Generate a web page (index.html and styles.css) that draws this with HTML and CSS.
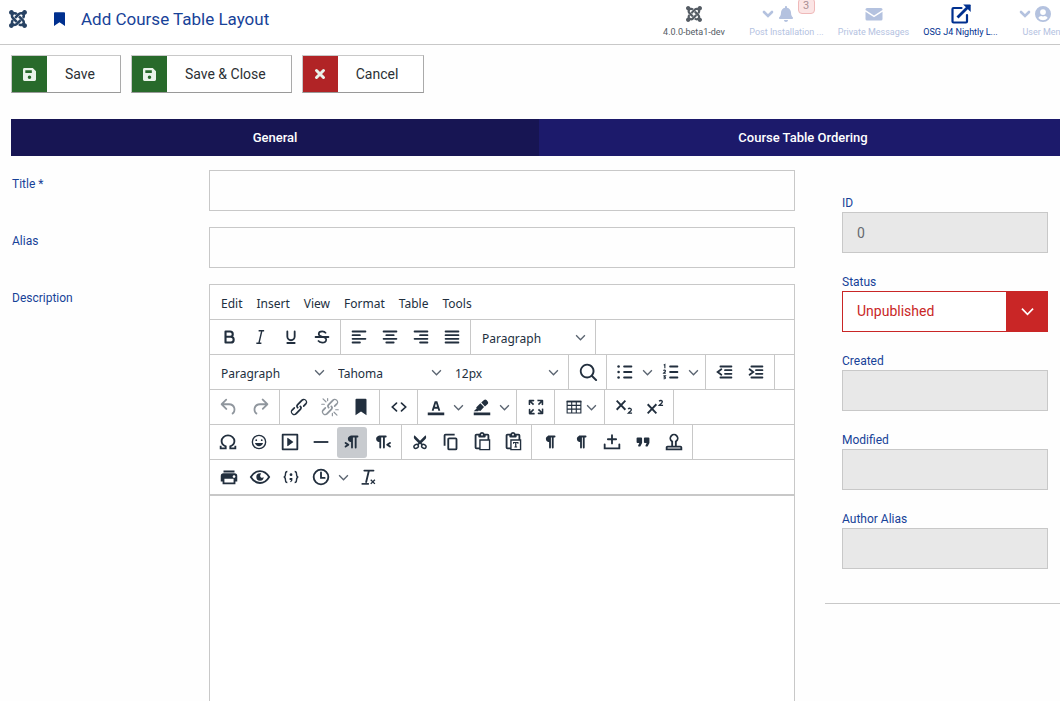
FILE: index.html
```html
<!DOCTYPE html>
<html lang="en">
<head>
<meta charset="utf-8">
<meta name="viewport" content="width=device-width, initial-scale=1">
<title>Add Course Table Layout</title>
<link rel="stylesheet" href="styles.css">
</head>
<body>
<svg class="sprite" aria-hidden="true">
  <symbol id="joomla" viewBox="0 32 448 448"><path d="M.6 92.1C.6 58.8 27.4 32 60.4 32c30 0 54.5 21.9 59.2 50.2 32.6-7.6 67.1.6 96.5 30l-44.3 44.3c-20.5-20.5-42.6-16.3-55.4-3.5-14.3 14.3-14.3 37.9 0 52.2l99.5 99.5-44 44.3c-87.7-87.2-49.7-49.7-99.8-99.7-26.8-26.5-35-64.8-24.8-98.9C20.4 144.6.6 120.7.6 92.1zm129.5 116.4l44.3 44.3c10-10 89.7-89.7 99.7-99.8 14.3-14.3 37.6-14.3 51.9 0 12.8 12.8 17 35-3.5 55.4l44 44.3c31.2-31.2 38.5-67.6 28.9-101.2 29.2-4.1 51.9-29.2 51.9-59.5 0-33.2-26.8-60.1-59.8-60.1-30.3 0-55.4 22.5-59.5 51.6-33.8-9.9-71.7-1.5-98.3 25.1-18.3 19.1-71.1 71.5-99.6 99.9zm266.3 152.2c8.2-32.7-.9-68.5-26.3-93.9-11.8-12.2 5 4.7-99.5-99.7l-44.3 44.3 99.7 99.7c14.3 14.3 14.3 37.6 0 51.9-12.8 12.8-35 17-55.4-3.5l-44 44.3c27.6 30.2 68 38.8 102.7 28 5.5 27.4 29.7 48.1 58.9 48.1 33 0 59.8-26.8 59.8-60.1 0-30.2-22.5-55-51.6-59.1zm-84.3-53.1l-44-44.3c-87 86.4-50.4 50.4-99.7 99.8-14.3 14.3-37.6 14.3-51.9 0-13.1-13.4-16.9-35.3 3.2-55.4l-44-44.3c-30.2 30.2-38 65.2-29.5 98.3-26.7 6-46.2 29.9-46.2 58.2C0 453.2 26.8 480 59.8 480c28.6 0 52.5-19.8 58.6-46.7 32.7 8.2 68.5-.6 94.2-26 32.1-32 12.2-12.4 99.5-99.7z"/></symbol>
  <symbol id="bookmark" viewBox="0 0 12 15"><path d="M0 1a1 1 0 011-1h10a1 1 0 011 1v14l-6-4-6 4z"/></symbol>
  <symbol id="save" viewBox="0 0 14 14"><path fill-rule="evenodd" d="M1.500 0H10.500L14 3.500V12.500A1.500 1.500 0 0112.500 14H1.500A1.500 1.500 0 010 12.500V1.500A1.500 1.500 0 011.500 0zM2.500 2.500V5.500H9.500V2.500zM7 8a1.900 1.900 0 100 3.800A1.900 1.900 0 007 8z"/></symbol>
  <symbol id="chevron" viewBox="0 0 10 10"><path d="M1 3l4 4 4-4" fill="none" stroke="currentColor" stroke-width="1.200"/></symbol>
  <symbol id="chevron-bold" viewBox="0 0 12 12"><path d="M2 4l4 4 4-4" fill="none" stroke="currentColor" stroke-width="2.600" stroke-linecap="round"/></symbol>
  <symbol id="pilcrow" viewBox="0 0 24 24"><path d="M10 5h7a1 1 0 010 2h-1v11a1 1 0 01-2 0V7h-1v11a1 1 0 01-2 0v-6c-.5 0-1 0-1.400-.3A3.400 3.400 0 017.800 10a3.300 3.300 0 010-2.800 3.400 3.400 0 011.800-1.800z"/></symbol>
  <symbol id="clipboard" viewBox="0 0 24 24"><path fill-rule="evenodd" d="M18 9V5h-2v1c0 .6-.4 1-1 1H9a1 1 0 01-1-1V5H6v13h3V9h9zM9 20H6a2 2 0 01-2-2V5c0-1.100.9-2 2-2h3.200A3 3 0 0112 1a3 3 0 012.800 2H18a2 2 0 012 2v4h1v12H9v-1zm1.500-9.500v9h9v-9h-9zM12 3a1 1 0 00-1 1c0 .5.4 1 1 1s1-.5 1-1-.4-1-1-1z"/></symbol>
</svg>

<div class="page">
  <header class="topbar">
    <a class="logo" href="#" aria-label="Dashboard"><svg><use href="#joomla"/></svg></a>
    <h1 class="title"><svg class="title-icon"><use href="#bookmark"/></svg>Add Course Table Layout</h1>
    <nav class="status-nav" aria-label="Status">
      <span class="status-item status-version"><span class="status-icons"><svg class="icon-16"><use href="#joomla"/></svg></span>4.0.0-beta1-dev</span>
      <a class="status-item" href="#"><span class="status-icons status-shift"><svg class="icon-12"><use href="#chevron-bold"/></svg><span class="bell"><svg class="icon-16" viewBox="0 0 448 512"><path d="M224 512c35.320 0 63.970-28.650 63.970-64H160.030c0 35.350 28.650 64 63.970 64zm215.390-149.710c-19.320-20.760-55.470-51.990-55.470-154.290 0-77.700-54.480-139.900-127.940-155.160V32c0-17.670-14.320-32-31.980-32s-31.980 14.330-31.980 32v20.840C118.560 68.100 64.080 130.300 64.080 208c0 102.300-36.150 133.530-55.470 154.290-6 6.450-8.660 14.160-8.610 21.710.11 16.400 12.980 32 32.100 32h383.800c19.120 0 32-15.600 32.100-32 .05-7.550-2.610-15.270-8.610-21.710z"/></svg><span class="badge">3</span></span></span>Post Installation ...</a>
      <a class="status-item" href="#"><span class="status-icons"><svg class="icon-18" viewBox="0 0 18 18"><path d="M2 3h14a1.500 1.500 0 011.500 1.500V5L9 10.500.5 5v-.5A1.500 1.500 0 012 3zM.5 6.800L9 12.300l8.500-5.500V14a1.500 1.500 0 01-1.500 1.500H2A1.500 1.500 0 01.5 14z"/></svg></span>Private Messages</a>
      <a class="status-item status-active" href="#"><span class="status-icons"><svg class="icon-20" viewBox="0 0 20 20"><path d="M10.500 4H2.500a1 1 0 00-1 1v12.500a1 1 0 001 1H15a1 1 0 001-1V11" fill="none" stroke="currentColor" stroke-width="2.200" stroke-linecap="round"/><path d="M6.500 13.500L16.500 3.500" stroke="currentColor" stroke-width="2.800"/><path d="M12.200.5H19a.7.7 0 01.7.7V8z"/></svg></span>OSG J4 Nightly L...</a>
      <a class="status-item status-user" href="#"><span class="status-icons status-shift"><svg class="icon-12"><use href="#chevron-bold"/></svg><svg class="icon-16" viewBox="0 0 16 16"><path fill-rule="evenodd" d="M8 0a8 8 0 100 16A8 8 0 008 0zM8 3.200a2.900 2.900 0 110 5.800 2.900 2.900 0 010-5.800zM8 14.200a6.200 6.200 0 01-4.700-2.200C3.900 10.700 5 10 6.200 10c1.200.5 2.400.5 3.600 0 1.200 0 2.300.7 2.900 2A6.200 6.200 0 018 14.200z"/></svg></span>User Menu</a>
    </nav>
  </header>

  <div class="actions">
    <button class="action action-save" type="button"><span class="action-icon"><svg class="icon-13"><use href="#save"/></svg></span><span class="action-text">Save</span></button>
    <button class="action action-save" type="button"><span class="action-icon"><svg class="icon-13"><use href="#save"/></svg></span><span class="action-text">Save &amp; Close</span></button>
    <button class="action action-cancel" type="button"><span class="action-icon"><svg class="icon-12" viewBox="0 0 12 12"><path d="M2.500 2.500l7 7M9.500 2.500l-7 7" stroke="currentColor" stroke-width="3" stroke-linecap="round"/></svg></span><span class="action-text">Cancel</span></button>
  </div>

  <div class="tabs" role="tablist">
    <button class="tab tab-current" type="button" role="tab" aria-selected="true">General</button>
    <button class="tab" type="button" role="tab" aria-selected="false">Course Table Ordering</button>
  </div>

  <form class="layout">
    <div class="fields">
      <label for="title">Title *</label>
      <input class="control" id="title" type="text">
      <label for="alias">Alias</label>
      <input class="control" id="alias" type="text">
      <label for="description">Description</label>
      <div class="editor">
        <div class="menubar">
          <button type="button">Edit</button><button type="button">Insert</button><button type="button">View</button><button type="button">Format</button><button type="button">Table</button><button type="button">Tools</button>
        </div>
        <div class="row">
          <div class="group group-first">
            <button class="tool" type="button" aria-label="Bold"><svg viewBox="0 0 24 24"><path d="M8.200 6h5a2.900 2.900 0 010 5.800h-5zM8.200 11.800h5.800a3.100 3.100 0 010 6.200H8.200z" fill="none" stroke="currentColor" stroke-width="2.300" stroke-linejoin="round"/></svg></button>
            <button class="tool" type="button" aria-label="Italic"><svg viewBox="0 0 24 24"><path d="M10.500 5.200h6M8 18.800h5.500M14 5.200l-3.200 13.600" fill="none" stroke="currentColor" stroke-width="1.500"/></svg></button>
            <button class="tool" type="button" aria-label="Underline"><svg viewBox="0 0 24 24"><path d="M8 6v5.500a4 4 0 008 0V6M8 18.500h8" fill="none" stroke="currentColor" stroke-width="2" stroke-linecap="round"/></svg></button>
            <button class="tool" type="button" aria-label="Strikethrough"><svg viewBox="0 0 24 24"><path d="M16.400 8C15.400 6.500 14 5.800 12.300 5.800c-2.400 0-3.900 1-3.900 2.900 0 4 8.200 2 8.200 6.100 0 2-1.700 3.400-4.400 3.400-1.900 0-3.500-.8-4.600-2.300" fill="none" stroke="currentColor" stroke-width="1.800"/><path d="M5 12h14" stroke="currentColor" stroke-width="2" stroke-linecap="round"/></svg></button>
          </div>
          <div class="group group-long">
            <button class="tool" type="button" aria-label="Align left"><svg viewBox="0 0 24 24"><path d="M5 6h14M5 10h8M5 14h14M5 18h8" class="line"/></svg></button>
            <button class="tool" type="button" aria-label="Align center"><svg viewBox="0 0 24 24"><path d="M5 6h14M8 10h8M5 14h14M8 18h8" class="line"/></svg></button>
            <button class="tool" type="button" aria-label="Align right"><svg viewBox="0 0 24 24"><path d="M5 6h14M11 10h8M5 14h14M11 18h8" class="line"/></svg></button>
            <button class="tool" type="button" aria-label="Justify"><svg viewBox="0 0 24 24"><path d="M5 6h14M5 10h14M5 14h14M5 18h14" class="line"/></svg></button>
          </div>
          <div class="group group-selects">
            <span class="picker"><select aria-label="Block format"><option>Paragraph</option></select><svg><use href="#chevron"/></svg></span>
          </div>
        </div>
        <div class="row">
          <div class="group group-selects">
            <span class="picker"><select aria-label="Style"><option>Paragraph</option></select><svg><use href="#chevron"/></svg></span>
            <span class="picker"><select aria-label="Font"><option>Tahoma</option></select><svg><use href="#chevron"/></svg></span>
            <span class="picker"><select aria-label="Font size"><option>12px</option></select><svg><use href="#chevron"/></svg></span>
          </div>
          <div class="group">
            <button class="tool" type="button" aria-label="Find and replace"><svg viewBox="0 0 24 24"><path fill-rule="evenodd" d="M16 17.300a8 8 0 111.400-1.400l4.300 4.400a1 1 0 01-1.400 1.400l-4.400-4.300zm-5-.3a6 6 0 100-12 6 6 0 000 12z"/></svg></button>
          </div>
          <div class="group">
            <button class="tool tool-split" type="button" aria-label="Bullet list"><svg viewBox="0 0 24 24"><path d="M11 6h8M11 12h8M11 18h8" class="line"/><circle cx="5" cy="6" r="1.400"/><circle cx="5" cy="12" r="1.400"/><circle cx="5" cy="18" r="1.400"/></svg><svg class="drop"><use href="#chevron"/></svg></button>
            <button class="tool tool-split" type="button" aria-label="Numbered list"><svg viewBox="0 0 24 24"><path d="M11 6h8M11 12h8M11 18h8" class="line"/><path d="M4 4.500l1.300-.7V8M3.600 10.400c1-.8 2.400-.5 2.400.4 0 .8-1.200 1.400-2 2.400h2.300M3.700 16.200h2.200l-1.100 1.400c1.700 0 1.500 2.300-.9 1.700" fill="none" stroke="currentColor" stroke-width="1.200"/></svg><svg class="drop"><use href="#chevron"/></svg></button>
          </div>
          <div class="group">
            <button class="tool" type="button" aria-label="Decrease indent"><svg viewBox="0 0 24 24"><path d="M7 6h12M12 10h7M12 14h7M7 18h12" class="line"/><path d="M8 9l-4 3 4 3" class="line"/></svg></button>
            <button class="tool" type="button" aria-label="Increase indent"><svg viewBox="0 0 24 24"><path d="M7 6h12M12 10h7M12 14h7M7 18h12" class="line"/><path d="M5 9l4 3-4 3" class="line"/></svg></button>
          </div>
        </div>
        <div class="row">
          <div class="group group-selects">
            <button class="tool" type="button" disabled aria-label="Undo"><svg viewBox="0 0 24 24"><path d="M6.400 8H12c3.700 0 6.200 2 6.800 5.100.6 2.700-.4 5.600-2.300 6.800a1 1 0 01-1-1.800c1.100-.6 1.800-2.700 1.400-4.600-.5-2.100-2.100-3.500-4.900-3.500H6.400l3.300 3.300a1 1 0 11-1.400 1.400l-5-5a1 1 0 010-1.400l5-5a1 1 0 011.400 1.400L6.400 8z"/></svg></button>
            <button class="tool" type="button" disabled aria-label="Redo"><svg viewBox="0 0 24 24"><path d="M17.600 10H12c-2.800 0-4.400 1.400-4.900 3.500-.4 2 .3 4 1.400 4.600a1 1 0 11-1 1.800c-2-1.200-2.900-4.100-2.300-6.800.6-3 3-5.100 6.800-5.100h5.600l-3.300-3.300a1 1 0 111.400-1.400l5 5a1 1 0 010 1.400l-5 5a1 1 0 01-1.400-1.400l3.300-3.300z"/></svg></button>
          </div>
          <div class="group">
            <button class="tool" type="button" aria-label="Link"><svg viewBox="0 0 24 24"><path d="M6.200 12.300a1 1 0 011.400 1.400l-2.100 2a2 2 0 102.700 2.800l4.800-4.800a1 1 0 000-1.400 1 1 0 111.400-1.300 2.900 2.900 0 010 4L9.600 20a3.900 3.900 0 01-5.500-5.500l2-2zm11.600-.6a1 1 0 01-1.400-1.400l2-2a2 2 0 10-2.600-2.800L11 10.300a1 1 0 000 1.400A1 1 0 119.600 13a2.900 2.900 0 010-4L14.400 4a3.900 3.900 0 015.500 5.500l-2 2z"/></svg></button>
            <button class="tool" type="button" disabled aria-label="Remove link"><svg viewBox="0 0 24 24"><path d="M6.200 12.300a1 1 0 011.400 1.400l-2 2a2 2 0 102.600 2.800l4.800-4.800a1 1 0 000-1.400 1 1 0 111.400-1.300 2.900 2.900 0 010 4L9.600 20a3.900 3.900 0 01-5.500-5.500l2-2zm11.600-.6a1 1 0 01-1.400-1.400l2.100-2a2 2 0 10-2.700-2.800L11 10.300a1 1 0 000 1.400A1 1 0 119.600 13a2.900 2.900 0 010-4L14.400 4a3.900 3.900 0 015.500 5.500l-2 2z"/><path d="M7.600 6.300L4.400 3.100M9.400 5V2.800M5.800 9H3M16.400 17.700l3.200 3.200M14.600 19v2.500M18.200 15H21" fill="none" stroke="currentColor" stroke-width="1.300" stroke-linecap="round"/></svg></button>
            <button class="tool" type="button" aria-label="Anchor"><svg viewBox="0 0 24 24"><path d="M6 4v17l6-4 6 4V4c0-.6-.4-1-1-1H7a1 1 0 00-1 1z"/></svg></button>
          </div>
          <div class="group">
            <button class="tool" type="button" aria-label="Source code"><svg viewBox="0 0 24 24"><path d="M9.300 7.700L4.700 12l4.600 4.300M14.700 7.700l4.600 4.300-4.600 4.300" fill="none" stroke="currentColor" stroke-width="1.800" stroke-linecap="round"/></svg></button>
          </div>
          <div class="group">
            <button class="tool tool-split" type="button" aria-label="Text color"><svg viewBox="0 0 24 24"><path d="M3 18h18v3H3z"/><path d="M8.300 16l3-9.200h1.400l3 9.200M9.500 12.800h5" fill="none" stroke="currentColor" stroke-width="2"/></svg><svg class="drop"><use href="#chevron"/></svg></button>
            <button class="tool tool-split" type="button" aria-label="Background color"><svg viewBox="0 0 24 24"><path d="M3 18h18v3H3zM7.700 16.700H3l3.300-3.300-.7-.8L10.200 8l4 4.100-4 4.200c-.2.2-.6.2-.8 0l-.6-.7zM11.200 7.200l3-2.900a2 2 0 012.700 0L18.200 6c.7.7.7 2 0 2.700l-3 2.700z"/></svg><svg class="drop"><use href="#chevron"/></svg></button>
          </div>
          <div class="group">
            <button class="tool" type="button" aria-label="Fullscreen"><svg viewBox="0 0 24 24"><path d="M15.300 10l-1.200-1.300 2.900-3h-2.300a.9.9 0 110-1.700H19c.5 0 .9.4.9.9v4.400a.9.9 0 11-1.800 0V7l-2.900 3zm0 4l3 3v-2.300a.9.9 0 111.700 0V19c0 .5-.4.9-.9.9h-4.400a.9.9 0 110-1.800H17l-3-2.900 1.300-1.200zM10 15.400l-2.900 3h2.300a.9.9 0 110 1.700H5a.9.9 0 01-.9-.9v-4.400a.9.9 0 111.800 0V17l2.900-3 1.200 1.400zM8.700 10L5.700 7v2.300a.9.9 0 01-1.700 0V5c0-.5.4-.9.9-.9h4.400a.9.9 0 010 1.800H7l3 2.900-1.300 1.200z"/></svg></button>
          </div>
          <div class="group">
            <button class="tool tool-menu" type="button" aria-label="Table"><svg viewBox="0 0 24 24"><path d="M4.500 6h15v12.500h-15zM4.500 10.200h15M4.500 14.300h15M9.500 6v12.500M14.500 6v12.500" fill="none" stroke="currentColor" stroke-width="1.200"/><path d="M4 5h16v2H4z"/></svg><svg class="drop"><use href="#chevron"/></svg></button>
          </div>
          <div class="group">
            <button class="tool" type="button" aria-label="Subscript"><svg viewBox="0 0 24 24"><path d="M4 5l9.500 10M13.500 5L4 15" fill="none" stroke="currentColor" stroke-width="2"/><path d="M16.500 14.200c1.200-1.300 3.500-1 3.500.7 0 1.200-1.600 2.200-3.200 3.800h4" fill="none" stroke="currentColor" stroke-width="1.500"/></svg></button>
            <button class="tool" type="button" aria-label="Superscript"><svg viewBox="0 0 24 24"><path d="M4 9l9.500 10M13.500 9L4 19" fill="none" stroke="currentColor" stroke-width="2"/><path d="M16.500 5.700c1.200-1.300 3.500-1 3.500.7 0 1.200-1.600 2.200-3.200 3.800h4" fill="none" stroke="currentColor" stroke-width="1.500"/></svg></button>
          </div>
        </div>
        <div class="row">
          <div class="group group-long">
            <button class="tool" type="button" aria-label="Special character"><svg viewBox="0 0 24 24"><path d="M4 19h5.500v-2.200C6.700 15.700 5 13.500 5 11a7 6.200 0 0114 0c0 2.500-1.700 4.700-4.500 5.800V19H20M4 16v3.800M20 16v3.800" fill="none" stroke="currentColor" stroke-width="2"/></svg></button>
            <button class="tool" type="button" aria-label="Emoticons"><svg viewBox="0 0 24 24"><path fill-rule="evenodd" d="M9 11c.6 0 1-.4 1-1s-.4-1-1-1a1 1 0 00-1 1c0 .6.4 1 1 1zm6 0c.6 0 1-.4 1-1s-.4-1-1-1a1 1 0 00-1 1c0 .6.4 1 1 1zm-3 5.500c2.100 0 4-1.500 4.400-3.500H7.600c.5 2 2.300 3.500 4.400 3.500zM12 4a8 8 0 100 16 8 8 0 000-16zm0 14.500a6.500 6.500 0 110-13 6.500 6.500 0 010 13z"/></svg></button>
            <button class="tool" type="button" aria-label="Media"><svg viewBox="0 0 24 24"><path fill-rule="evenodd" d="M4 3h16c.6 0 1 .4 1 1v16c0 .6-.4 1-1 1H4a1 1 0 01-1-1V4c0-.6.4-1 1-1zm1 2v14h14V5H5zm4.800 2.600l5.600 4a.5.5 0 010 .8l-5.600 4A.5.5 0 019 16V8a.5.5 0 01.8-.4z"/></svg></button>
            <button class="tool" type="button" aria-label="Horizontal line"><svg viewBox="0 0 24 24"><path d="M4 11h16v2H4z"/></svg></button>
            <button class="tool tool-on" type="button" aria-pressed="true" aria-label="Left to right"><svg viewBox="0 0 24 24"><path d="M11 5h7a1 1 0 010 2h-1v11a1 1 0 01-2 0V7h-2v11a1 1 0 01-2 0v-6c-.5 0-1 0-1.400-.3A3.400 3.400 0 017.800 10a3.300 3.300 0 010-2.800 3.400 3.400 0 011.800-1.800L11 5zM4.400 16.200L6.200 15l-1.800-1.200a1 1 0 011.200-1.600l3 2a1 1 0 010 1.600l-3 2a1 1 0 11-1.200-1.600z"/></svg></button>
            <button class="tool" type="button" aria-label="Right to left"><svg viewBox="0 0 24 24"><path d="M8 5h7a1 1 0 010 2h-1v11a1 1 0 01-2 0V7h-2v11a1 1 0 01-2 0v-6c-.5 0-1 0-1.400-.3A3.400 3.400 0 014.800 10a3.300 3.300 0 010-2.800 3.400 3.400 0 011.800-1.800L8 5zm12.200 11.200a1 1 0 11-1.200 1.600l-3-2a1 1 0 010-1.600l3-2a1 1 0 111.200 1.600L18.400 15z"/></svg></button>
          </div>
          <div class="group group-long">
            <button class="tool" type="button" aria-label="Cut"><svg viewBox="0 0 24 24"><path d="M6 4.500l6 6 6-6c1 1.500.9 3.200 0 4.300L13.700 13l1.800 1.600-1.400 1.300L12 14l-2.100 1.900-1.400-1.300 1.800-1.600L6 8.800c-.9-1.100-1-2.800 0-4.300z"/><ellipse cx="7.800" cy="16.800" rx="2.600" ry="2" transform="rotate(-35 7.800 16.800)" fill="none" stroke="currentColor" stroke-width="1.500"/><ellipse cx="16.200" cy="16.800" rx="2.600" ry="2" transform="rotate(35 16.200 16.800)" fill="none" stroke="currentColor" stroke-width="1.500"/></svg></button>
            <button class="tool" type="button" aria-label="Copy"><svg viewBox="0 0 24 24"><path fill-rule="evenodd" d="M16 3H6a2 2 0 00-2 2v11h2V5h10V3zm1 4a2 2 0 012 2v10a2 2 0 01-2 2h-7a2 2 0 01-2-2V9c0-1.200.9-2 2-2h7zm0 12V9h-7v10h7z"/></svg></button>
            <button class="tool" type="button" aria-label="Paste"><svg><use href="#clipboard"/></svg></button>
            <button class="tool" type="button" aria-label="Paste as text"><svg viewBox="0 0 24 24"><use href="#clipboard"/><path d="M12 12h6v2h-1l-.5-1h-.8v4h.8v1h-3v-1h.8v-4h-.8l-.5 1h-1z"/></svg></button>
          </div>
          <div class="group group-long">
            <button class="tool" type="button" aria-label="Show blocks"><svg><use href="#pilcrow"/></svg></button>
            <button class="tool" type="button" aria-label="Show invisible characters"><svg><use href="#pilcrow"/></svg></button>
            <button class="tool" type="button" aria-label="Nonbreaking space"><svg viewBox="0 0 24 24"><path d="M12 4.500v9M7.500 9h9M4 14.500V19h16v-4.500" fill="none" stroke="currentColor" stroke-width="2" stroke-linecap="round"/></svg></button>
            <button class="tool" type="button" aria-label="Blockquote"><svg viewBox="0 0 24 24"><path d="M7.500 17h.9c.4 0 .7-.2.9-.6L11 13V8c0-.6-.4-1-1-1H6a1 1 0 00-1 1v4c0 .6.4 1 1 1h2l-1.300 2.700a1 1 0 00.8 1.300zm8 0h.9c.4 0 .7-.2.9-.6L19 13V8c0-.6-.4-1-1-1h-4a1 1 0 00-1 1v4c0 .6.4 1 1 1h2l-1.300 2.700a1 1 0 00.8 1.300z"/></svg></button>
            <button class="tool" type="button" aria-label="Template"><svg viewBox="0 0 24 24"><path fill-rule="evenodd" d="M19 19v-1H5v1h14zM9 16v-4a5 5 0 116 0v4h4a2 2 0 012 2v3H3v-3c0-1.100.9-2 2-2h4zm4 0v-5l.8-.6a3 3 0 10-3.600 0l.8.6v5h2z"/></svg></button>
          </div>
        </div>
        <div class="row">
          <div class="group group-last">
            <button class="tool" type="button" aria-label="Print"><svg viewBox="0 0 24 24"><path fill-rule="evenodd" d="M18 8H6a3 3 0 00-3 3v6h2v3h14v-3h2v-6a3 3 0 00-3-3zm-1 10H7v-4h10v4zm.5-5c-.8 0-1.500-.7-1.500-1.500s.7-1.500 1.500-1.500 1.500.7 1.500 1.500-.7 1.500-1.500 1.500zm.5-8H6v2h12V5z"/></svg></button>
            <button class="tool" type="button" aria-label="Preview"><svg viewBox="0 0 24 24"><path d="M2 12c2.500-4.200 5.900-6.500 10-6.500S19.500 7.800 22 12c-2.500 4.200-5.900 6.500-10 6.500S4.500 16.200 2 12z" fill="none" stroke="currentColor" stroke-width="2"/><path d="M12 8a4 4 0 104 4c-.6 1-3.200 1.200-3.700-.6C11.800 9.800 13 9 13.300 8.200A4 4 0 0012 8z"/></svg></button>
            <button class="tool" type="button" aria-label="Code sample"><svg viewBox="0 0 24 24"><path d="M8 6C6 6 6 7 6 8.500 6 10.500 6 12 4 12c2 0 2 1.500 2 3.500C6 17 6 18 8 18M16 6c2 0 2 1 2 2.500 0 2 0 3.500 2 3.500-2 0-2 1.500-2 3.500 0 1.500 0 2.500-2 2.500" fill="none" stroke="currentColor" stroke-width="1.500"/><circle cx="12" cy="9.500" r="1.500"/><path d="M13.500 13v2.200c0 1-.7 2-2.300 2.400v-1c.6-.3.8-.8.8-1.400h-1.500V13z"/></svg></button>
            <button class="tool tool-split" type="button" aria-label="Insert date"><svg viewBox="0 0 24 24"><circle cx="12" cy="12" r="8" fill="none" stroke="currentColor" stroke-width="2"/><path d="M12 7v6h4" class="line"/></svg><svg class="drop"><use href="#chevron"/></svg></button>
            <button class="tool" type="button" aria-label="Clear formatting"><svg viewBox="0 0 24 24"><path d="M8 5h10M13 5l-3 12.500" class="line"/><path d="M5 19.500h8" stroke="currentColor" stroke-width="1.800"/><path d="M15 15l4.500 4.500M19.500 15L15 19.500" fill="none" stroke="currentColor" stroke-width="1.500"/></svg></button>
          </div>
        </div>
        <textarea class="editor-body" id="description"></textarea>
      </div>
    </div>

    <aside class="sidebar">
      <div class="side-field"><label for="id">ID</label><input class="control" id="id" type="text" value="0" readonly></div>
      <div class="side-field"><label for="status">Status</label>
        <span class="status-select"><select id="status"><option>Unpublished</option></select><span class="status-arrow"><svg class="icon-13" viewBox="0 0 14 14"><path d="M1 4l6 6 6-6" fill="none" stroke="currentColor" stroke-width="1.800"/></svg></span></span></div>
      <div class="side-field"><label for="created">Created</label><input class="control" id="created" type="text" readonly></div>
      <div class="side-field"><label for="modified">Modified</label><input class="control" id="modified" type="text" readonly></div>
      <div class="side-field"><label for="author">Author Alias</label><input class="control" id="author" type="text" readonly></div>
    </aside>
  </form>
</div>
</body>
</html>
```
FILE: styles.css
```css
* { box-sizing: border-box; }

body {
  margin: 0;
  background: #fefefe;
  color: #2c3034;
  font: 12px/18px Roboto, "Liberation Sans", sans-serif;
}

button, input, select, textarea { font: inherit; color: inherit; border-radius: 0; }
button { padding: 0; border: 0; background: none; }
svg { display: block; flex: none; fill: currentColor; }
a { color: inherit; text-decoration: none; }
label { color: #174298; }

.sprite { position: absolute; width: 0; height: 0; }
.page { height: 100vh; overflow: hidden; }

.icon-12 { width: 12px; height: 12px; }
.icon-13 { width: 13px; height: 13px; }
.icon-16 { width: 16px; height: 16px; }
.icon-18 { width: 18px; height: 18px; }
.icon-20 { width: 20px; height: 20px; }

/* Top bar */
.topbar {
  display: flex;
  height: 45px;
  border-bottom: 1px solid #c8c8c8;
  background: #fff;
}
.logo { padding: 10px 9px; color: #274263; }
.logo svg { width: 18px; height: 18px; }
.title {
  display: flex;
  align-items: center;
  gap: 16px;
  height: 38px;
  margin: 0 0 0 18px;
  color: #174298;
  font-size: 17px;
  font-weight: 400;
  white-space: nowrap;
}
.title-icon { width: 11px; height: 14px; color: #00308f; }
.status-nav { display: flex; margin: 0 -24px 0 auto; }
.status-item {
  display: flex;
  flex-direction: column;
  align-items: center;
  min-width: 87px;
  padding-top: 4px;
  color: #b4c2df;
  font-size: 9px;
  line-height: 16px;
  white-space: nowrap;
}
.status-icons { display: flex; align-items: center; gap: 4px; height: 20px; }
.status-shift { padding-right: 18px; }
.status-version { min-width: 98px; color: #555c64; }
.status-active { color: #00308f; }
.status-user { min-width: 80px; }
.bell { position: relative; }
.badge {
  position: absolute;
  left: 20px;
  top: -8px;
  width: 17px;
  border: 1px solid #efb9b9;
  border-radius: 4px;
  background: #fbe5e5;
  color: #a98f93;
  font-size: 11px;
  line-height: 14px;
  text-align: center;
}

/* Action buttons */
.actions { display: flex; gap: 10px; padding: 10px 11px 0; }
.action {
  display: flex;
  height: 38px;
  border: 1px solid #c8c8c8;
  border-right-color: #aaa;
  border-bottom-color: #999;
  background: #fff;
  font-size: 14px;
}
.action-icon {
  display: grid;
  place-items: center;
  width: 35px;
  height: 36px;
  color: #eaf3ea;
}
.action-save .action-icon { background: #286a2b; }
.action-cancel .action-icon { background: #b12426; }
.action-text { padding: 0 25px 0 18px; line-height: 36px; }

/* Tabs */
.tabs { display: flex; margin: 26px -7px 0 11px; }
.tab {
  flex: 1;
  height: 37px;
  background: #1c1a6b;
  color: #fff;
  font-size: 13px;
  font-weight: 500;
}
.tab-current { background: #171553; }

/* Form */
.layout {
  display: grid;
  grid-template-columns: minmax(0, 1fr) 235px;
  gap: 30px;
  align-items: start;
  padding: 14px 0 0 12px;
}
.fields {
  display: grid;
  grid-template-columns: 197px minmax(0, 1fr);
  row-gap: 16px;
}
.fields > label { padding-top: 5px; }
.control {
  width: 100%;
  height: 41px;
  padding: 0 14px;
  border: 1px solid #c8c8c8;
  background: #fefefe;
  font-size: 14px;
}
.control[readonly] { background: #e8e8e8; color: #666b70; }

.sidebar {
  display: flex;
  flex-direction: column;
  gap: 20px;
  padding: 24px 12px 34px 17px;
  border-bottom: 1px solid #c8c8c8;
}
.side-field { display: flex; flex-direction: column; }
.status-select { display: grid; grid-template-columns: minmax(0, 1fr) 42px; color: #c92626; }
.status-select select {
  grid-area: 1 / 1 / 2 / 3;
  height: 41px;
  padding: 0 14px 2px;
  border: 1px solid #c92626;
  background: #fff;
  font-size: 14px;
  appearance: none;
}
.status-arrow {
  grid-area: 1 / 2;
  display: grid;
  place-items: center;
  background: #c92626;
  color: #fff;
  pointer-events: none;
}

/* Editor */
.editor {
  border: 1px solid #c8c8c8;
  background: #fff;
  color: #222f3e;
  font-family: "Noto Sans", "Open Sans", sans-serif;
  font-size: 12px;
}
.menubar { display: flex; gap: 14px; height: 35px; padding: 3px 11px 0; border-bottom: 1px solid #c8c8c8; }
.row { display: flex; height: 35px; border-bottom: 1px solid #c8c8c8; }
.group {
  display: flex;
  align-items: center;
  gap: 1px;
  padding: 0 3px 0 4px;
  border-right: 1px solid #c8c8c8;
}
.group-long { padding: 0 3px; }
.group-selects { padding: 0 4px; }
.group-last { border-right: 0; }
.tool {
  display: flex;
  align-items: center;
  justify-content: center;
  width: 30px;
  height: 31px;
  border-radius: 3px;
}
.tool svg { width: 22px; height: 22px; }
.tool .drop, .picker svg { width: 11px; height: 11px; color: #5a6470; }
.tool:disabled { color: #222f3e; opacity: .5; }
.tool-split { width: 45px; gap: 6px; }
.tool-menu { width: 42px; gap: 1px; }
.tool-on { background: #c8cbcf; }
.line { fill: none; stroke: currentColor; stroke-width: 2; stroke-linecap: round; }

.picker { display: grid; align-items: center; width: 116px; }
.picker select {
  grid-area: 1 / 1;
  height: 31px;
  padding: 3px 24px 0 7px;
  border: 0;
  background: none;
  appearance: none;
}
.picker svg { grid-area: 1 / 1; justify-self: end; margin-right: 5px; pointer-events: none; }
.editor-body {
  display: block;
  width: 100%;
  height: 400px;
  padding: 10px;
  border: 0;
  border-top: 1px solid #c8c8c8;
  background: #fff;
  resize: none;
}
```
